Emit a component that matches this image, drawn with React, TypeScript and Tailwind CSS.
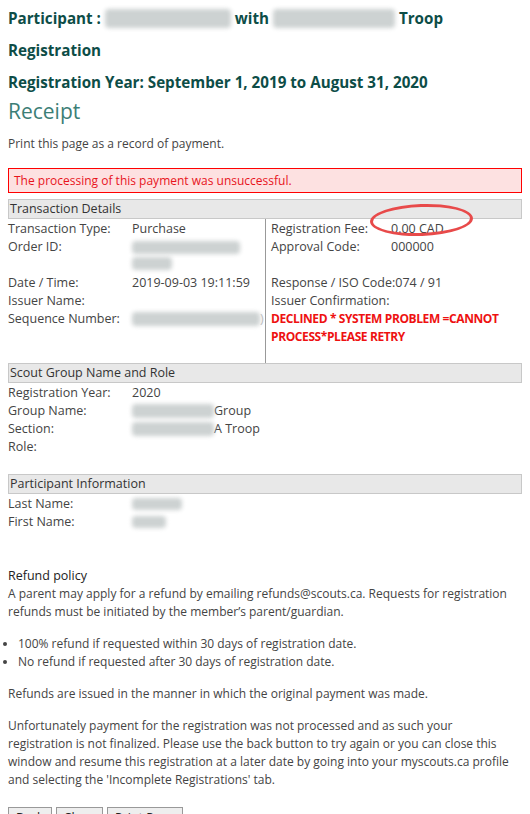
import React from 'react'

const Blur = ({ w, h = 14, className = '' }: { w: number; h?: number; className?: string }) => (
  <span
    className={`inline-block align-middle rounded-sm bg-[#cdd2d2] blur-[2px] ${className}`}
    style={{ width: w, height: h }}
  />
)

const SectionHeader = ({ title }: { title: string }) => (
  <div className="h-[20px] border border-[#c8c8c8] bg-[#e8e8e8] px-[1px] text-[12.5px] leading-[18px] text-[#333]">
    {title}
  </div>
)

const Row = ({ label, children, labelW = 124 }: { label: string; children?: React.ReactNode; labelW?: number }) => (
  <div className="flex h-[18px] leading-[18px]">
    <div className="shrink-0" style={{ width: labelW }}>{label}</div>
    <div className="flex items-center whitespace-nowrap">{children}</div>
  </div>
)

export default function App() {
  return (
    <div className="min-h-[814px] overflow-hidden bg-white px-[8px] text-[12px] text-[#444] font-['Open_Sans',sans-serif]">
      {/* Page heading */}
      <div className="pt-[2px] text-[15.2px] font-bold leading-[32px] text-[#0d4d47]">
        <div className="flex items-center whitespace-nowrap">
          Participant :&nbsp;<Blur w={126} h={19} className="bg-[#bcc8c8]" />&nbsp;with&nbsp;
          <Blur w={122} h={19} className="bg-[#bcc8c8]" />&nbsp;Troop
        </div>
        <div>Registration</div>
        <div className="whitespace-nowrap">Registration Year: September 1, 2019 to August 31, 2020</div>
      </div>
      <h1 className="text-[21px] leading-[26px] text-[#3c7e76]">Receipt</h1>

      <p className="mt-[12px] leading-[16px]">Print this page as a record of payment.</p>

      <div className="mt-[16px] border border-[#f00] bg-[#fde1e1] px-[5px] text-[12px] leading-[23px] text-[#e8141c]">
        The processing of this payment was unsuccessful.
      </div>

      {/* Transaction details */}
      <div className="mt-[6px]">
        <SectionHeader title="Transaction Details" />
        <div className="flex text-[12.5px]">
          <div className="w-[257px] pt-[1px]">
            <Row label="Transaction Type:">Purchase</Row>
            <div className="flex h-[36px] leading-[18px]">
              <div className="w-[124px] shrink-0">Order ID:</div>
              <div className="flex flex-col gap-[3px] pt-[3px]">
                <Blur w={108} h={13} />
                <Blur w={40} h={13} />
              </div>
            </div>
            <Row label="Date / Time:">2019-09-03 19:11:59</Row>
            <Row label="Issuer Name:" />
            <Row label="Sequence Number:">
              <Blur w={128} h={14} />
              <span className="text-[#bbb]">)</span>
            </Row>
          </div>
          <div className="w-px self-stretch bg-[#999]" />
          <div className="relative flex-1 pl-[5px] pt-[1px] pb-[17px]">
            <Row label="Registration Fee:" labelW={120}>0.00 CAD</Row>
            <Row label="Approval Code:" labelW={120}>000000</Row>
            <div className="h-[18px]" />
            <div className="h-[18px] whitespace-nowrap leading-[18px]">Response / ISO Code:074 / 91</div>
            <div className="h-[18px] leading-[18px]">Issuer Confirmation:</div>
            <div className="text-[12px] font-bold leading-[18px] tracking-[-0.4px] text-[#ee1111]">
              DECLINED * SYSTEM PROBLEM =CANNOT
              <br />
              PROCESS*PLEASE RETRY
            </div>
            {/* hand-drawn highlight round the fee */}
            <div className="absolute left-[104px] top-[-15px] h-[32px] w-[103px] -rotate-2 rounded-[50%] border-[3px] border-[#e84a4a]" />
          </div>
        </div>
      </div>

      {/* Scout group */}
      <SectionHeader title="Scout Group Name and Role" />
      <div className="pt-[1px] text-[12.5px]">
        <Row label="Registration Year:">2020</Row>
        <Row label="Group Name:">
          <Blur w={82} h={14} />
          Group
        </Row>
        <Row label="Section:">
          <Blur w={82} h={14} />
          A Troop
        </Row>
        <Row label="Role:" />
      </div>

      <div className="mt-[18px]">
        <SectionHeader title="Participant Information" />
        <div className="pt-[1px] text-[12.5px]">
          <Row label="Last Name:">
            <Blur w={50} h={12} />
          </Row>
          <Row label="First Name:">
            <Blur w={34} h={12} />
          </Row>
        </div>
      </div>

      {/* Refund policy */}
      <div className="mt-[36px] whitespace-nowrap text-[12px] leading-[18px]">
        <div className="text-[12.5px] text-[#222]">Refund policy</div>
        <p>
          A parent may apply for a refund by emailing refunds@scouts.ca. Requests for registration
          <br />
          refunds must be initiated by the member’s parent/guardian.
        </p>
        <ul className="my-[14px] -ml-[8px] list-disc pl-[18px]">
          <li>100% refund if requested within 30 days of registration date.</li>
          <li>No refund if requested after 30 days of registration date.</li>
        </ul>
        <p>Refunds are issued in the manner in which the original payment was made.</p>
        <p className="mt-[14px]">
          Unfortunately payment for the registration was not processed and as such your
          <br />
          registration is not finalized. Please use the back button to try again or you can close this
          <br />
          window and resume this registration at a later date by going into your myscouts.ca profile
          <br />
          and selecting the 'Incomplete Registrations' tab.
        </p>
        <div className="mt-[18px] flex gap-[4px]">
          {['Back', 'Close', 'Print Page'].map((b) => (
            <button
              key={b}
              className="h-[22px] border border-[#999] bg-[#eee] px-[7px] text-[12.5px] leading-[20px] text-[#222]"
            >
              {b}
            </button>
          ))}
        </div>
      </div>
    </div>
  )
}
